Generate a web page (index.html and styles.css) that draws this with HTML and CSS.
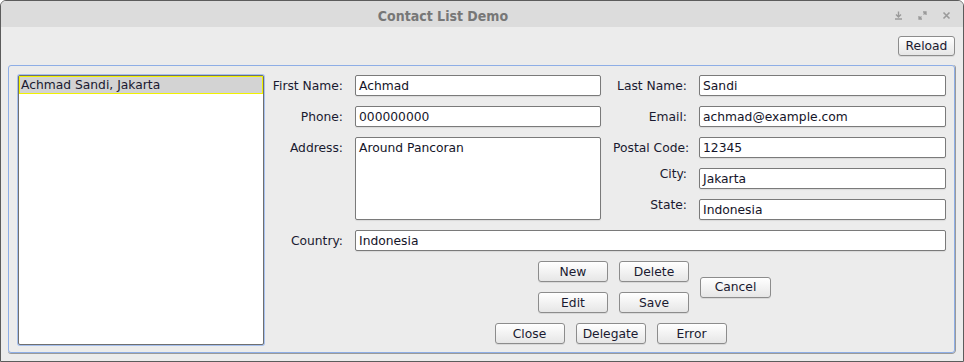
FILE: index.html
```html
<!DOCTYPE html>
<html lang="en">
<head>
    <meta charset="UTF-8">
    <title>Contact List Demo</title>
    <link rel="stylesheet" href="styles.css">
</head>
<body>

<div class="window">
    <div class="titlebar">
        <span class="title">Contact List Demo</span>
        <div class="wm-buttons">
            <svg width="9" height="9" viewBox="0 0 9 9"><path d="M4.5 0.5v5M2 3.5l2.5 2.5 2.5-2.5M1 8h7" stroke="#9a9a9a" stroke-width="1.4" fill="none"/></svg>
            <svg width="9" height="9" viewBox="0 0 9 9"><path d="M5 1h3v3M8 1L5.5 3.5M4 8H1V5M1 8l2.5-2.5" stroke="#9a9a9a" stroke-width="1.3" fill="none"/></svg>
            <svg width="9" height="9" viewBox="0 0 9 9"><path d="M1.5 1.5l6 6M7.5 1.5l-6 6" stroke="#9a9a9a" stroke-width="1.6" fill="none"/></svg>
        </div>
    </div>

    <div class="content">
        <div class="toolbar">
            <button class="btn reload">Reload</button>
        </div>

        <div class="panel">
            <div class="list">
                <div class="list-item selected">Achmad Sandi, Jakarta</div>
            </div>

            <div class="form">
                <label>First Name:</label>
                <div class="field">Achmad</div>
                <label>Last Name:</label>
                <div class="field">Sandi</div>

                <label>Phone:</label>
                <div class="field">000000000</div>
                <label>Email:</label>
                <div class="field">achmad@example.com</div>

                <label class="top">Address:</label>
                <div class="field area">Around Pancoran</div>
                <label>Postal Code:</label>
                <div class="field">12345</div>

                <label class="high">City:</label>
                <div class="field">Jakarta</div>

                <label class="high">State:</label>
                <div class="field">Indonesia</div>

                <label>Country:</label>
                <div class="field wide">Indonesia</div>

                <div class="actions">
                    <div class="edit-buttons">
                        <button class="btn">New</button>
                        <button class="btn">Delete</button>
                        <button class="btn cancel">Cancel</button>
                        <button class="btn">Edit</button>
                        <button class="btn">Save</button>
                    </div>
                </div>

                <div class="bottom-buttons">
                    <button class="btn">Close</button>
                    <button class="btn">Delegate</button>
                    <button class="btn">Error</button>
                </div>
            </div>
        </div>
    </div>
</div>

</body>
</html>
```

FILE: styles.css
```css
body {
    margin: 0;
    background: #ffffff;
    font-family: "DejaVu Sans", Verdana, sans-serif;
    font-size: 12.3px;
    color: #1a1a30;
}

.window {
    width: 964px;
    height: 362px;
    box-sizing: border-box;
    border: 1px solid #5c5c5c;
    border-radius: 6px 6px 0 0;
    background-color: #ececec;
    overflow: hidden;
    display: flex;
    flex-direction: column;
}

.titlebar {
    height: 26px;
    background-color: #dcdcdc;
    display: flex;
    align-items: center;
    justify-content: center;
    padding-right: 78px;
    position: relative;
}

.title {
    font-family: "DejaVu Sans Condensed", "DejaVu Sans", sans-serif;
    font-weight: bold;
    font-size: 14px;
    color: #777777;
    margin-top: 3px;
}

.wm-buttons {
    position: absolute;
    right: 12px;
    top: 10px;
    display: flex;
    gap: 15px;
}

.content {
    flex: 1;
    padding: 9px 8px 8px 7px;
    display: flex;
    flex-direction: column;
}

.toolbar {
    display: flex;
    justify-content: flex-end;
    margin-bottom: 9px;
}

.btn {
    font-family: "DejaVu Sans", Verdana, sans-serif;
    font-size: 12.3px;
    color: #1a1a30;
    width: 70px;
    height: 21px;
    padding: 0;
    border: 1px solid #8c8c8c;
    border-radius: 3px;
    background: linear-gradient(#ffffff, #e6e6e6);
    box-shadow: 0 1px 0 rgba(0, 0, 0, 0.08);
}

.reload {
    width: 57px;
    height: 20px;
}

.panel {
    flex: 1;
    display: flex;
    gap: 8px;
    padding: 9px 8px 7px 9px;
    border: 1px solid #8eaee6;
    border-radius: 3px;
    box-shadow: 0 1px 0 #9a9a9a, 1px 0 0 #9a9a9a;
}

.list {
    width: 246px;
    box-sizing: border-box;
    background: #ffffff;
    border: 1px solid #6f6f6f;
    border-radius: 2px;
    box-shadow: 0 0 0 1px #a6c0ee;
}

.list-item {
    height: 18px;
    line-height: 16px;
    box-sizing: border-box;
    padding-left: 1px;
}

.list-item.selected {
    background-color: #d3d3d3;
    border: 1px solid #f2f200;
}

.form {
    display: grid;
    grid-template-columns: 71px 246px 74px 247px;
    grid-auto-rows: 21px;
    column-gap: 12px;
    row-gap: 10px;
    align-content: start;
}

.form label {
    text-align: right;
    line-height: 22px;
    white-space: nowrap;
}

.form label.top {
    grid-row: span 3;
}

.form label.high {
    grid-column: 3;
    line-height: 12px;
}

.field {
    box-sizing: border-box;
    background: #ffffff;
    border: 1px solid #7a7a7a;
    border-radius: 2px;
    box-shadow: 0 1px 1px rgba(0, 0, 0, 0.08);
    padding: 1px 0 0 3px;
    line-height: 19px;
    color: #141428;
}

.field.area {
    grid-row: span 3;
}

.field.wide {
    grid-column: span 3;
}

.actions {
    grid-column: 2 / span 3;
    grid-row: span 2;
    display: flex;
    justify-content: center;
    padding-left: 8px;
}

.edit-buttons {
    display: grid;
    grid-template-columns: 70px 70px 71px;
    grid-template-rows: 21px 21px;
    column-gap: 11px;
    row-gap: 10px;
}

.edit-buttons .cancel {
    grid-column: 3;
    grid-row: 1 / span 2;
    align-self: center;
    width: 71px;
}

.bottom-buttons {
    grid-column: 1 / span 4;
    display: flex;
    justify-content: center;
    gap: 11px;
    padding-left: 3px;
}
```
